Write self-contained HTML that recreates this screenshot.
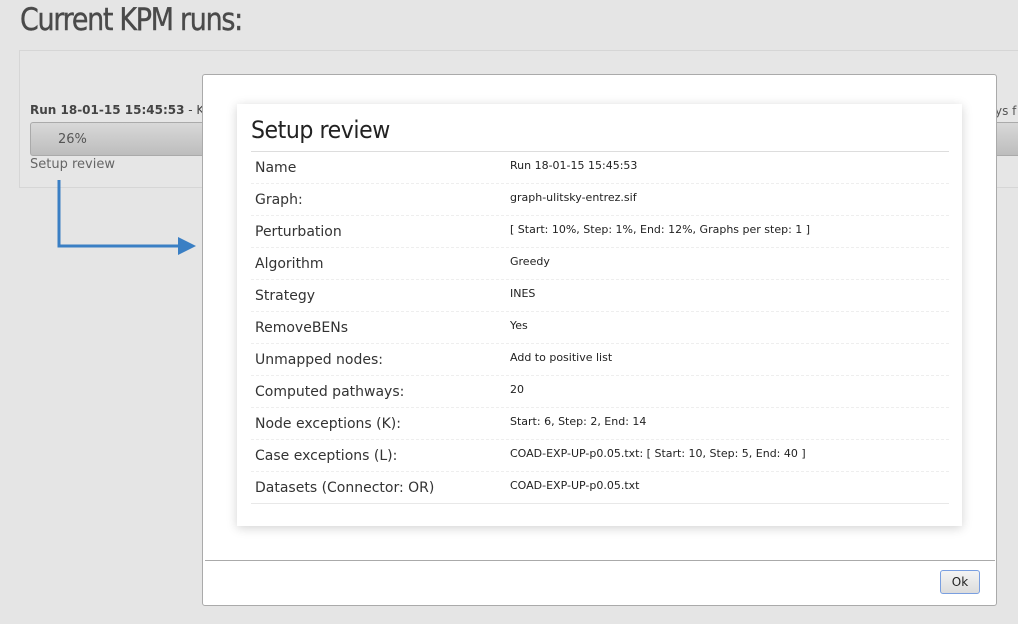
<!DOCTYPE html>
<html><head><style>
body{margin:0;width:1018px;height:624px;background:#e5e5e5;font-family:"DejaVu Sans","Liberation Sans",sans-serif;position:relative;overflow:hidden}
.abs{position:absolute}
h1{position:absolute;left:20px;top:2px;margin:0;font-weight:normal;font-size:31px;color:#4a4a4a;letter-spacing:-1.5px;transform:scaleX(0.87);transform-origin:0 0;-webkit-text-stroke:0.4px #4a4a4a}
.panel{left:19px;top:50px;width:1010px;height:136px;border:1px solid #d6d6d6;background:#e6e6e6}
.bar{left:30px;top:122px;width:1000px;height:32px;border:1px solid #aaa;border-radius:3px;background:linear-gradient(#d8d8d8,#bdbdbd)}
.dlg{left:202px;top:74px;width:793px;height:530px;background:#fff;border:1px solid #aaa;border-radius:3px}
.card{left:237px;top:104px;width:725px;height:422px;background:#fff;box-shadow:0 2px 10px rgba(0,0,0,.18)}
.row{position:absolute;left:251px;width:698px;height:31px;border-bottom:1px dashed #eee}
.row .l{position:absolute;left:4px;top:8px;font-size:14px;color:#333}
.row .v{position:absolute;left:259px;top:7px;font-size:11px;color:#222}
</style></head><body>
<h1>Current KPM runs:</h1>
<div class="abs panel"></div>
<div class="abs" style="left:30px;top:103px;font-size:12px;color:#444"><b>Run 18-01-15 15:45:53</b> - Ke</div>
<div class="abs" style="left:995px;top:104px;font-size:12px;color:#555">ys f</div>
<div class="abs bar"></div>
<div class="abs" style="left:58px;top:132px;font-size:13px;color:#555">26%</div>
<div class="abs" style="left:30px;top:157px;font-size:13px;color:#666">Setup review</div>
<svg class="abs" style="left:0;top:0" width="200" height="260"><path d="M59 180V246H180" fill="none" stroke="#3a7fc4" stroke-width="3"/><path d="M178 237L196 246L178 255Z" fill="#3a7fc4"/></svg>
<div class="abs dlg"></div>
<div class="abs" style="left:205px;top:560px;width:790px;height:1px;background:#aaa"></div>
<div class="abs" style="left:940px;top:570px;width:38px;height:22px;border:1px solid #7a9fe0;border-radius:3px;background:linear-gradient(#f4f4f4,#dcdcdc);font-size:12px;text-align:center;line-height:22px;color:#222">Ok</div>
<div class="abs card"></div>
<div class="abs" style="left:251px;top:116px;font-size:24px;color:#222;letter-spacing:-0.5px;transform:scaleX(0.92);transform-origin:0 0">Setup review</div>
<div class="abs" style="left:251px;top:151px;width:698px;height:1px;background:#ddd"></div>
<div class="row" style="top:152px"><span class="l">Name</span><span class="v">Run 18-01-15 15:45:53</span></div>
<div class="row" style="top:184px"><span class="l">Graph:</span><span class="v">graph-ulitsky-entrez.sif</span></div>
<div class="row" style="top:216px"><span class="l">Perturbation</span><span class="v">[ Start: 10%, Step: 1%, End: 12%, Graphs per step: 1 ]</span></div>
<div class="row" style="top:248px"><span class="l">Algorithm</span><span class="v">Greedy</span></div>
<div class="row" style="top:280px"><span class="l">Strategy</span><span class="v">INES</span></div>
<div class="row" style="top:312px"><span class="l">RemoveBENs</span><span class="v">Yes</span></div>
<div class="row" style="top:344px"><span class="l">Unmapped nodes:</span><span class="v">Add to positive list</span></div>
<div class="row" style="top:376px"><span class="l">Computed pathways:</span><span class="v">20</span></div>
<div class="row" style="top:408px"><span class="l">Node exceptions (K):</span><span class="v">Start: 6, Step: 2, End: 14</span></div>
<div class="row" style="top:440px"><span class="l">Case exceptions (L):</span><span class="v">COAD-EXP-UP-p0.05.txt: [ Start: 10, Step: 5, End: 40 ]</span></div>
<div class="row" style="top:472px;border-bottom:1px solid #e8e8e8"><span class="l">Datasets (Connector: OR)</span><span class="v">COAD-EXP-UP-p0.05.txt</span></div>
</body></html>
